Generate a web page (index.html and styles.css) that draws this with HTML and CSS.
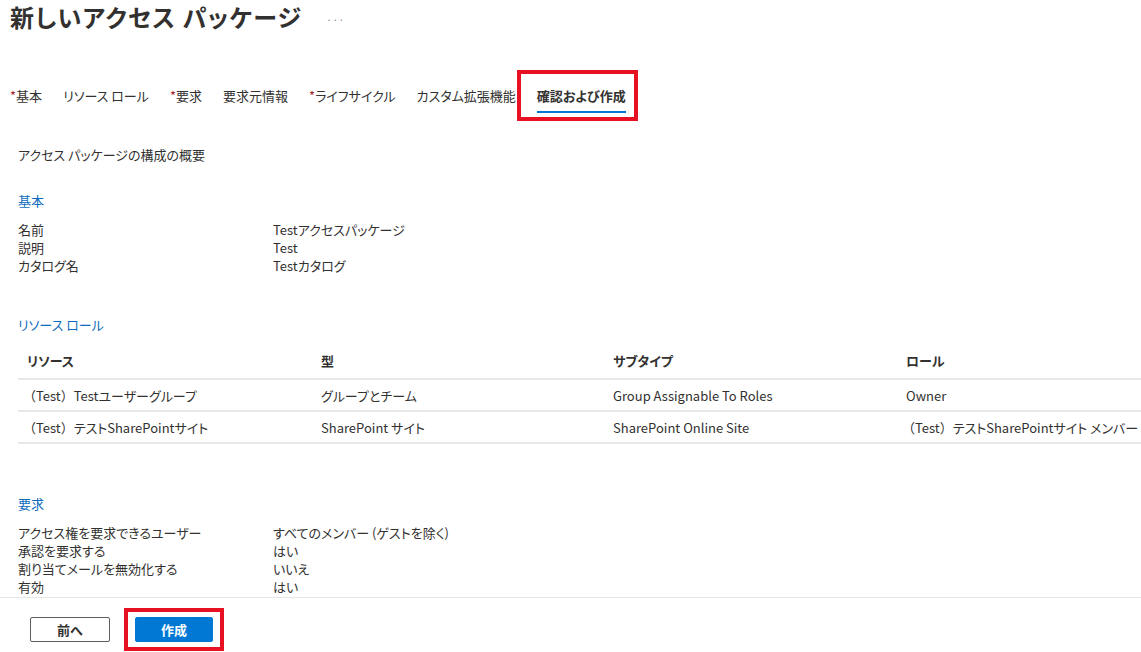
FILE: index.html
```html
<!DOCTYPE html>
<html lang="ja">

<head>
    <meta charset="UTF-8">
    <meta name="viewport" content="width=device-width, initial-scale=1.0">
    <title>新しいアクセス パッケージ</title>
    <link rel="stylesheet" href="styles.css">
</head>

<body>
    <div class="page">
        <div class="main">
            <div class="header">
                <h1>新しいアクセス パッケージ</h1>
                <span class="more">&middot;&middot;&middot;</span>
            </div>

            <ul class="tabs">
                <li><span class="req">*</span>基本</li>
                <li>リソース ロール</li>
                <li><span class="req">*</span>要求</li>
                <li>要求元情報</li>
                <li><span class="req">*</span>ライフサイクル</li>
                <li>カスタム拡張機能</li>
                <li class="active marked">確認および作成</li>
            </ul>

            <div class="content">
                <p class="summary">アクセス パッケージの構成の概要</p>

                <h2 class="section-title">基本</h2>
                <dl class="props">
                    <div class="prop"><dt>名前</dt><dd>Testアクセスパッケージ</dd></div>
                    <div class="prop"><dt>説明</dt><dd>Test</dd></div>
                    <div class="prop"><dt>カタログ名</dt><dd>Testカタログ</dd></div>
                </dl>

                <h2 class="section-title roles-title">リソース ロール</h2>
                <table class="grid">
                    <thead>
                        <tr>
                            <th class="c1">リソース</th>
                            <th class="c2">型</th>
                            <th class="c3">サブタイプ</th>
                            <th class="c4">ロール</th>
                        </tr>
                    </thead>
                    <tbody>
                        <tr>
                            <td><span class="fw">（Test）</span>Testユーザーグループ</td>
                            <td>グループとチーム</td>
                            <td>Group Assignable To Roles</td>
                            <td>Owner</td>
                        </tr>
                        <tr>
                            <td><span class="fw">（Test）</span>テストSharePointサイト</td>
                            <td>SharePoint サイト</td>
                            <td>SharePoint Online Site</td>
                            <td><span class="fw">（Test）</span>テストSharePointサイト メンバー</td>
                        </tr>
                    </tbody>
                </table>

                <h2 class="section-title req-title">要求</h2>
                <dl class="props">
                    <div class="prop"><dt>アクセス権を要求できるユーザー</dt><dd>すべてのメンバー (ゲストを除く)</dd></div>
                    <div class="prop"><dt>承認を要求する</dt><dd>はい</dd></div>
                    <div class="prop"><dt>割り当てメールを無効化する</dt><dd>いいえ</dd></div>
                    <div class="prop"><dt>有効</dt><dd>はい</dd></div>
                </dl>
            </div>
        </div>

        <div class="footer">
            <button class="btn">前へ</button>
            <span class="mark-box"><button class="btn primary">作成</button></span>
        </div>
    </div>
</body>

</html>
```

FILE: styles.css
```css
* {
    margin: 0;
    padding: 0;
    box-sizing: border-box;
}

ul,
li {
    list-style: none;
}

body {
    font-family: "Noto Sans CJK JP", "Noto Sans", sans-serif;
    font-feature-settings: "palt" 1;
    font-size: 13px;
    color: #323130;
    background: #fff;
}

.page {
    height: 100vh;
    display: flex;
    flex-direction: column;
}

.main {
    flex: 1;
    overflow: hidden;
}

.header {
    display: flex;
    align-items: center;
    padding-left: 10px;
    height: 34px;
}

.header h1 {
    font-size: 24px;
    font-weight: 700;
    line-height: 34px;
    letter-spacing: 1.3px;
}

.more {
    margin-left: 24px;
    margin-top: 4px;
    font-size: 10px;
    color: #8a8886;
    letter-spacing: 0.5px;
}

.tabs {
    display: flex;
    gap: 21px;
    margin-top: 46px;
    padding-left: 10px;
}

.tabs li {
    position: relative;
    line-height: 31px;
    height: 33px;
    border-bottom: 2px solid transparent;
}

.tabs li.active {
    font-weight: 700;
    border-bottom-color: #0078d4;
}

/* 注釈の赤枠 */
.tabs li.marked::after {
    content: "";
    position: absolute;
    left: -20px;
    right: -12px;
    top: -10px;
    bottom: -10px;
    border: 4px solid #e81123;
}

.req {
    color: #a4262c;
}

.content {
    padding-left: 18px;
}

.summary {
    margin-top: 33px;
    line-height: 18px;
}

.section-title {
    font-size: 13px;
    font-weight: 400;
    color: #0f6cbd;
    line-height: 18px;
    margin-top: 28px;
}

.roles-title {
    margin-top: 41px;
}

.req-title {
    margin-top: 51px;
}

.props {
    margin-top: 11px;
}

.prop {
    display: flex;
    line-height: 18px;
}

.prop dt {
    width: 255px;
}

.grid {
    width: 100%;
    border-collapse: collapse;
    margin-top: 9px;
}

.grid th,
.grid td {
    text-align: left;
    padding-left: 9px;
    border-bottom: 2px solid #e8e8e8;
    white-space: nowrap;
}

.grid th {
    font-weight: 700;
    height: 36px;
}

.grid td {
    height: 32px;
}

.fw {
    font-feature-settings: normal;
    margin-left: -4px;
}

.c1 {
    width: 294px;
}

.c2 {
    width: 292px;
}

.c3 {
    width: 293px;
}

.footer {
    height: 55px;
    border-top: 1px solid #e6e6e6;
    display: flex;
    align-items: flex-start;
    padding: 10px 0 0 30px;
    gap: 14px;
}

.footer > .btn {
    margin-top: 9px;
}

.btn {
    width: 80px;
    height: 25px;
    font-family: inherit;
    font-size: 13px;
    font-weight: 700;
    color: #323130;
    background: #fff;
    border: 1px solid #605e5c;
    border-radius: 2px;
    cursor: pointer;
}

.btn.primary {
    width: 78px;
    color: #fff;
    background: #0078d4;
    border-color: #0078d4;
}

/* 注釈の赤枠 */
.mark-box {
    display: inline-block;
    border: 4px solid #e81123;
    padding: 5px 7px;
    line-height: 0;
}
```
